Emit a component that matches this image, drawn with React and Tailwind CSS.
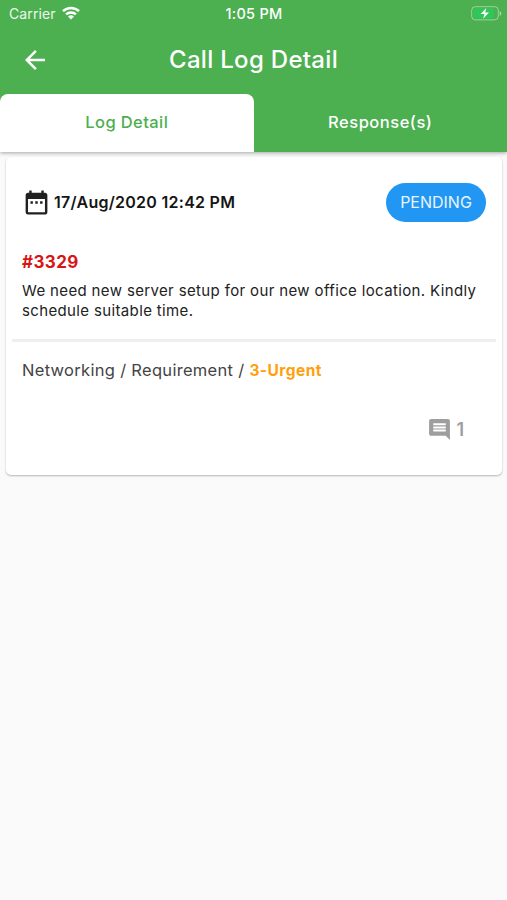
import React from 'react';
import { MdArrowBack, MdComment, MdDateRange } from 'react-icons/md';

const StatusBar = () => (
    <div className="grid h-[27px] grid-cols-3 items-center pl-[9px] pr-[5px]">
        <div className="flex items-center gap-[6px]">
            <span className="text-[14px] leading-none tracking-[0.1px] text-white/90">Carrier</span>
            <svg className="-mt-[2px] h-[14px] w-[18px]" viewBox="0 0 18 14" fill="none" stroke="#fff" strokeWidth="2.5">
                <path d="M1 5.1a11.6 11.6 0 0 1 16 0" />
                <path d="M4.1 8.4a7 7 0 0 1 9.8 0" />
                <path d="M9 13.6 6 10.6a4.3 4.3 0 0 1 6 0z" fill="#fff" stroke="none" />
            </svg>
        </div>
        <span className="-ml-[3px] pt-[1px] text-center text-[14.5px] font-medium leading-none tracking-[0.25px] text-white">1:05 PM</span>
        <svg className="h-[15px] w-[31px] justify-self-end" viewBox="0 0 31 15">
            <rect x="0.7" y="0.7" width="26.6" height="13.2" rx="3.6" fill="none" stroke="#fff" strokeOpacity="0.45" />
            <rect x="2.3" y="2.2" width="20.5" height="10.2" rx="2" fill="#30c75a" />
            <path d="M28.7 5v4.8c1-.4 1.6-1.3 1.6-2.4S29.7 5.4 28.7 5z" fill="#fff" fillOpacity="0.5" />
            <path d="M15.3 2 9.7 8h3.7l-1.2 4.8 5.8-6.2h-3.8z" fill="#fff" />
        </svg>
    </div>
);

const Header = () => (
    <div className="grid h-[67px] grid-cols-[51px_1fr_51px] items-center pb-[2px]">
        <MdArrowBack className="ml-[20px] size-[30px] text-white" />
        <h1 className="text-center text-[24px] font-medium leading-none tracking-[0.3px] text-white">Call Log Detail</h1>
    </div>
);

const Tabs = () => (
    <div className="grid h-[58px] grid-cols-2 text-[16.5px] font-medium">
        <button className="rounded-t-[8px] bg-white pb-[1px] tracking-[0.4px] text-[#4caf50]">Log Detail</button>
        <button className="pb-[1px] tracking-[0.5px] text-white">Response(s)</button>
    </div>
);

const LogCard = ({ log }) => (
    <div className="ml-[6px] mr-[5px] mt-[5px] h-[318px] rounded-[5px] bg-white px-[6px] shadow-[0_1px_2px_rgba(0,0,0,0.28)]">
        <div className="flex items-center justify-between px-[10px] pt-[26px]">
            <div className="flex items-center gap-[3px]">
                <MdDateRange className="size-[29px] text-[#202020]" />
                <span className="pb-[2px] text-[16px] font-semibold tracking-[0.27px] text-[#151515]">{log.date}</span>
            </div>
            <span className="flex h-[39px] w-[100px] items-center justify-center rounded-full bg-[#2196f3] pb-[2px] text-[16px] text-white/90">
                {log.status}
            </span>
        </div>

        <div className="px-[10px] pt-[28px]">
            <div className="text-[17px] font-bold leading-[24px] tracking-[0.4px] text-[#d81515]">#{log.id}</div>
            <p className="mt-[7px] text-[15px] leading-[19.5px] tracking-[0.36px] text-[#222]">{log.message}</p>
        </div>

        <div className="mt-[19px] h-[3px] bg-[#efefef]" />

        <div className="px-[10px] pt-[16px] text-[16.5px] leading-[24px] tracking-[0.3px] text-[#444]">
            {log.category} / {log.type} / <span className="text-[15.5px] font-bold tracking-[0.45px] text-[#ff9f0f]">{log.priority}</span>
        </div>

        <div className="flex items-center justify-end gap-[4px] pr-[32px] pt-[34px] text-[#9e9e9e]">
            <MdComment className="size-[25px]" />
            <span className="text-[18px] font-semibold leading-[25px]">{log.comments}</span>
        </div>
    </div>
);

const log = {
    id: 3329,
    date: '17/Aug/2020 12:42 PM',
    status: 'PENDING',
    message: 'We need new server setup for our new office location. Kindly schedule suitable time.',
    category: 'Networking',
    type: 'Requirement',
    priority: '3-Urgent',
    comments: 1,
};

const App = () => {
    return (
        <div className="h-[900px] w-[507px] overflow-hidden bg-[#fafafa] font-['Inter',sans-serif]">
            <header className="bg-[#4caf50] shadow-[0_1px_4px_rgba(0,0,0,0.35)]">
                <StatusBar />
                <Header />
                <Tabs />
            </header>
            <LogCard log={log} />
        </div>
    );
};

export default App;
